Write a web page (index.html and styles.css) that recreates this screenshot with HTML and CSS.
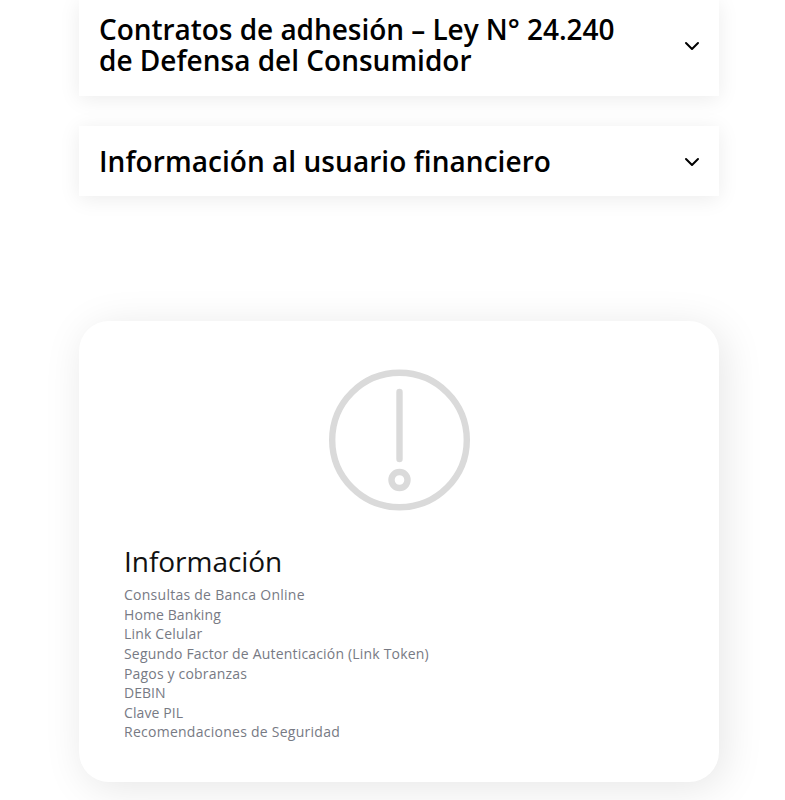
FILE: index.html
```html
<!DOCTYPE html>
<html lang="es">
<head>
<meta charset="utf-8">
<title>Información al usuario</title>
<link rel="stylesheet" href="styles.css">
</head>
<body>
<main class="page">
  <section class="accordion">
    <h2 class="item item-tall">
      <span class="label"><span class="line line-tight">Contratos de adhesión – Ley N° 24.240</span> <span class="line">de Defensa del Consumidor</span></span>
      <svg class="chevron" viewBox="0 0 16 10"><path d="M2 2 8 8l6-6"/></svg>
    </h2>
    <h2 class="item">
      <span class="label label-wide">Información al usuario financiero</span>
      <svg class="chevron" viewBox="0 0 16 10"><path d="M2 2 8 8l6-6"/></svg>
    </h2>
  </section>
  <section class="card">
    <svg class="notice" viewBox="0 0 142 142">
      <circle cx="71.500" cy="71" r="67.300"/>
      <path d="M71.500 23v67"/>
      <circle cx="71.500" cy="111" r="8"/>
    </svg>
    <h3 class="title">Información</h3>
    <ul class="links">
      <li class="loose">Consultas de Banca Online</li>
      <li class="snug">Home Banking</li>
      <li>Link Celular</li>
      <li>Segundo Factor de Autenticación (Link Token)</li>
      <li>Pagos y cobranzas</li>
      <li class="plain">DEBIN</li>
      <li class="snug">Clave PIL</li>
      <li class="loose">Recomendaciones de Seguridad</li>
    </ul>
  </section>
</main>
</body>
</html>
```
FILE: styles.css
```css
* { box-sizing: border-box; }
body { margin: 0; background: #fff; font-family: "Open Sans", sans-serif; }
.page { width: 785px; height: 800px; padding: 0 66px 0 79px; overflow: hidden; }
.accordion { display: flex; flex-direction: column; gap: 30px; }
.item {
  display: flex;
  align-items: center;
  justify-content: space-between;
  margin: 0;
  height: 70px;
  padding: 0 19px 0 20px;
  background: #fff;
  box-shadow: 0 3px 20px rgba(0, 0, 0, .08);
  color: #000;
  font-size: 28px;
  font-weight: 570;
  line-height: 31px;
}
.item-tall { height: 96px; padding-bottom: 6px; }
.item-tall .chevron { margin-top: 2px; }
.line { display: block; }
.line-tight { letter-spacing: -.04px; }
.label-wide { letter-spacing: .05px; }
.chevron { width: 16px; height: 10px; margin-top: 1px; flex: none; fill: none; stroke: #000; stroke-width: 2; stroke-linecap: round; stroke-linejoin: round; }
.card {
  height: 461px;
  margin-top: 125px;
  padding: 48px 45px 0;
  border-radius: 30px;
  background: #fff;
  box-shadow: 5px 6px 42px rgba(0, 0, 0, .1);
}
.notice { display: block; width: 142px; height: 142px; margin: 0 auto; fill: none; stroke: #dadada; stroke-width: 6.4; stroke-linecap: round; }
.title { margin: 32px 0 0; color: #111; font-size: 28px; font-weight: 400; line-height: 36px; letter-spacing: -.04px; }
.links { margin: 6.2px 0 0; padding: 0; list-style: none; color: #777a84; font-size: 14px; line-height: 19.6px; letter-spacing: .18px; }
.loose { letter-spacing: .26px; }
.snug { letter-spacing: .1px; }
.plain { letter-spacing: 0; }
```
